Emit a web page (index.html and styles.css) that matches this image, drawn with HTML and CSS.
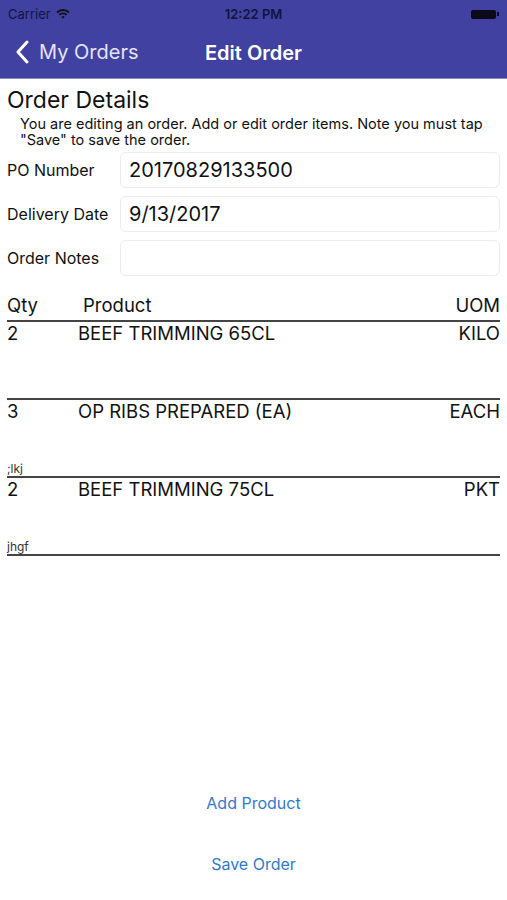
FILE: index.html
```html
<!DOCTYPE html>
<html lang="en">
<head>
  <meta charset="UTF-8" />
  <meta name="viewport" content="width=device-width, initial-scale=1" />
  <title>Edit Order</title>
  <link rel="stylesheet" href="styles.css">
</head>
<body>
  <div class="header">
    <div class="status">
      <div class="carrier">Carrier
        <svg width="14" height="10" viewBox="0 0 14 10">
          <path d="M1 3.5 A8.5 8.5 0 0 1 13 3.5" fill="none" stroke="#111" stroke-width="1.8"/>
          <path d="M3.4 5.9 A5 5 0 0 1 10.6 5.9" fill="none" stroke="#111" stroke-width="1.8"/>
          <path d="M7 9.6 L5.3 7.9 A2.4 2.4 0 0 1 8.7 7.9 Z" fill="#111"/>
        </svg>
      </div>
      <div class="time">12:22 PM</div>
      <div class="battery"><span class="cell"></span><span class="tip"></span></div>
    </div>
    <div class="navbar">
      <div class="back">
        <svg width="14" height="24" viewBox="0 0 14 24">
          <path d="M12 2 L3 12 L12 22" fill="none" stroke="#fff" stroke-width="3" stroke-linecap="round" stroke-linejoin="round"/>
        </svg>
        <span>My Orders</span>
      </div>
      <div class="title">Edit Order</div>
    </div>
  </div>

  <div class="content">
    <h1>Order Details</h1>
    <p class="intro">You are editing an order. Add or edit order items. Note you must tap "Save" to save the order.</p>

    <div class="field">
      <label>PO Number</label>
      <div class="box">20170829133500</div>
    </div>
    <div class="field">
      <label>Delivery Date</label>
      <div class="box">9/13/2017</div>
    </div>
    <div class="field">
      <label>Order Notes</label>
      <div class="box"></div>
    </div>

    <div class="thead">
      <span class="qty">Qty</span>
      <span class="prod">Product</span>
      <span class="uom">UOM</span>
    </div>

    <div class="item">
      <div class="main">
        <span class="qty">2</span>
        <span class="prod">BEEF TRIMMING 65CL</span>
        <span class="uom">KILO</span>
      </div>
      <div class="note"></div>
    </div>
    <div class="item">
      <div class="main">
        <span class="qty">3</span>
        <span class="prod">OP RIBS PREPARED (EA)</span>
        <span class="uom">EACH</span>
      </div>
      <div class="note">;lkj</div>
    </div>
    <div class="item">
      <div class="main">
        <span class="qty">2</span>
        <span class="prod">BEEF TRIMMING 75CL</span>
        <span class="uom">PKT</span>
      </div>
      <div class="note">jhgf</div>
    </div>
  </div>

  <div class="actions">
    <a class="link">Add Product</a>
    <a class="link">Save Order</a>
  </div>
</body>
</html>
```

FILE: styles.css
```css
body {
  margin: 0;
  width: 507px;
  height: 900px;
  font-family: Inter, "Noto Sans", sans-serif;
  background: #fff;
  color: #111;
  display: flex;
  flex-direction: column;
}
.header {
  background: #4141a1;
  border-bottom: 1px solid #8888c4;
  height: 78px;
}
.status {
  height: 28px;
  display: flex;
  align-items: center;
  justify-content: space-between;
  padding: 0 8px;
  font-size: 13px;
  color: #14143a;
}
.carrier {
  display: flex;
  align-items: center;
  gap: 5px;
  width: 100px;
}
.time {
  font-weight: 600;
}
.battery {
  width: 100px;
  display: flex;
  justify-content: flex-end;
  align-items: center;
}
.battery .cell {
  width: 25px;
  height: 9px;
  background: #0a0a18;
  border-radius: 2px;
}
.battery .tip {
  width: 2px;
  height: 4px;
  background: #0a0a18;
  margin-left: 1px;
}
.navbar {
  height: 50px;
  display: flex;
  align-items: center;
  justify-content: center;
  position: relative;
  color: #fff;
  font-size: 20px;
}
.back {
  position: absolute;
  left: 15px;
  top: 12px;
  display: flex;
  align-items: center;
  gap: 10px;
  color: #e4e4f4;
}
.title {
  font-weight: 600;
}
.content {
  padding: 8px 7px 0 7px;
}
h1 {
  font-size: 23px;
  font-weight: 400;
  margin: 0;
  line-height: 26px;
}
.intro {
  font-size: 14.5px;
  line-height: 16px;
  margin: 3px 0 4px 13px;
}
.field {
  display: flex;
  align-items: center;
  height: 36px;
  margin-bottom: 8px;
}
.field label {
  width: 113px;
  font-size: 16px;
}
.box {
  flex: 1;
  height: 34px;
  border: 1px solid #ececec;
  border-radius: 6px;
  font-size: 20px;
  line-height: 34px;
  padding-left: 8px;
}
.thead, .main {
  display: flex;
  font-size: 18.5px;
}
.thead {
  padding-top: 6px;
  height: 30px;
  line-height: 30px;
  border-bottom: 2px solid #444;
}
.thead .prod {
  margin-left: 45px;
}
.qty {
  width: 31px;
}
.prod {
  margin-left: 40px;
  flex: 1;
}
.item {
  height: 76px;
  border-bottom: 2px solid #444;
  display: flex;
  flex-direction: column;
  justify-content: space-between;
}
.main {
  line-height: 22px;
}
.note {
  font-size: 12px;
  line-height: 14px;
  color: #333;
}
.actions {
  margin-top: auto;
  margin-bottom: 26px;
  display: flex;
  flex-direction: column;
  align-items: center;
  gap: 41px;
}
.link {
  color: #3479c9;
  font-size: 16px;
}
```
